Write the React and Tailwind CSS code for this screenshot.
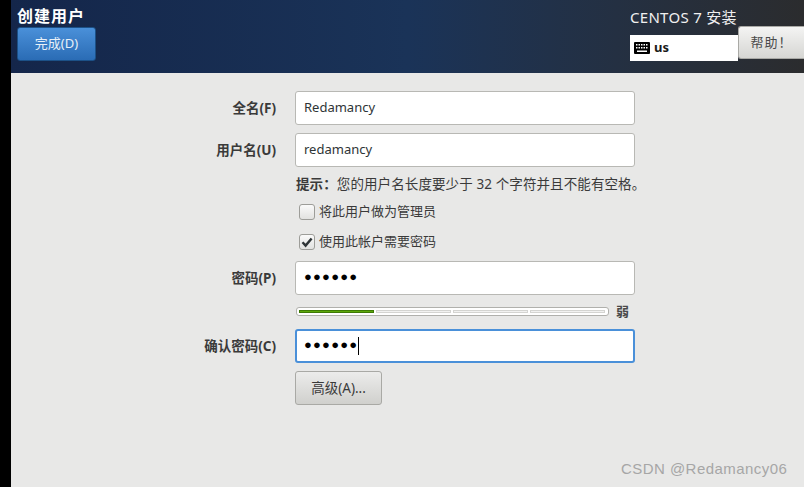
import React from 'react';

const Field = ({ label, children }) => (
  <div className="flex items-center">
    <label className="w-[265px] text-right text-[13.5px] font-bold text-[#3a3a3a]">{label}</label>
    <div className="ml-[19px]">{children}</div>
  </div>
);

const Input = ({ value, focused, dots }) => (
  <div
    className={`flex items-center w-[340px] h-[34px] bg-white rounded-[3px] ${
      focused ? 'border-2 border-[#4a90d9] pl-[7px]' : 'border border-[#b8b8b4] pl-[8px]'
    } ${dots ? 'text-[13px] text-black tracking-[1.2px]' : 'text-[13px] text-[#2e3436]'}`}
  >
    <span className={dots ? 'font-["Liberation_Sans"] -mt-[2px]' : ''}>{value}</span>
    {focused && <span className="w-px h-[18px] bg-black" />}
  </div>
);

const Check = ({ checked, label }) => (
  <div className="flex items-center ml-[288px] h-[16px]">
    <div className="flex items-center justify-center w-[16px] h-[16px] rounded-[3px] border border-[#9d9d99] bg-gradient-to-b from-[#fafafa] to-[#e2e2e0]">
      {checked && (
        <svg width="12" height="12" viewBox="0 0 12 12">
          <path d="M1.5 6.2 4.6 9.6 10.6 2.4" fill="none" stroke="#2e3436" strokeWidth="2.4" />
        </svg>
      )}
    </div>
    <span className="ml-[4px] text-[13px] text-[#3a3a3a]">{label}</span>
  </div>
);

export default function App() {
  return (
    <div className='relative flex w-[804px] h-[487px] overflow-hidden bg-black font-["Noto_Sans","Noto_Sans_CJK_SC",sans-serif]'>
      <div className="w-[11px] shrink-0" />
      <div className="flex flex-col flex-1 bg-[#e8e8e7]">
        <header className="flex justify-between h-[73px] bg-gradient-to-r from-[#14264a] via-[#1a3358] to-[#2b2c2e]">
          <div className="pl-[6px] pt-[6px]">
            <h1 className="text-[16px] leading-[20px] font-bold text-white tracking-[1px]">创建用户</h1>
            <button className="mt-px w-[79px] h-[34px] rounded-[3px] border border-[#1c5187] bg-gradient-to-b from-[#4a90d9] to-[#2a6cb5] text-[13px] text-[#e8f0f8]">
              完成(D)
            </button>
          </div>
          <div className="flex flex-col w-[174px] pt-[7px]">
            <div className="text-[15px] leading-[20px] text-[#f0f0f0] tracking-[0.3px] whitespace-nowrap">CENTOS 7 安装</div>
            <div className="flex items-start -mt-[1px]">
              <div className="flex items-center w-[108px] h-[26px] mt-[9px] bg-white pl-[4px]">
                <svg width="16" height="12" viewBox="0 0 16 12">
                  <rect width="16" height="12" rx="1" fill="#000" />
                  <g fill="#fff">
                    <rect x="2" y="2" width="1.5" height="1.5" />
                    <rect x="4.5" y="2" width="1.5" height="1.5" />
                    <rect x="7" y="2" width="1.5" height="1.5" />
                    <rect x="9.5" y="2" width="1.5" height="1.5" />
                    <rect x="12" y="2" width="1.5" height="1.5" />
                    <rect x="2" y="5" width="1.5" height="1.5" />
                    <rect x="4.5" y="5" width="1.5" height="1.5" />
                    <rect x="7" y="5" width="1.5" height="1.5" />
                    <rect x="9.5" y="5" width="1.5" height="1.5" />
                    <rect x="12" y="5" width="1.5" height="1.5" />
                    <rect x="3" y="8.5" width="10" height="1.5" />
                  </g>
                </svg>
                <span className="ml-[4px] text-[13px] font-bold text-[#1a1a1a]">us</span>
              </div>
              <button className="w-[66px] h-[33px] rounded-l-[3px] border border-[#a9a9a5] border-r-0 bg-gradient-to-b from-[#f4f4f3] to-[#d6d6d3] text-[13px] text-[#4a4a4a] tracking-[1px]">
                帮助！
              </button>
            </div>
          </div>
        </header>

        <main className="flex flex-col pt-[18px]">
          <Field label="全名(F)"><Input value="Redamancy" /></Field>
          <div className="mt-[8px]">
            <Field label="用户名(U)"><Input value="redamancy" /></Field>
          </div>
          <p className="ml-[285px] mt-[8px] text-[13.5px] leading-[18px] text-[#3a3a3a] whitespace-nowrap tracking-[0.1px]">
            <b>提示：</b>您的用户名长度要少于 32 个字符并且不能有空格。
          </p>
          <div className="mt-[11px]"><Check label="将此用户做为管理员" /></div>
          <div className="mt-[14px]"><Check checked label="使用此帐户需要密码" /></div>
          <div className="mt-[11px]">
            <Field label="密码(P)"><Input value="●●●●●●" dots /></Field>
          </div>
          <div className="flex items-center ml-[285px] mt-[12px]">
            <div className="flex gap-[2px] w-[313px] h-[9px] p-[2px] rounded-[3px] border border-[#b0b0ac] bg-white">
              <div className="w-[75px] bg-[#5ca80a] border border-[#3d7a05]" />
              <div className="w-[75px] bg-[#f2f2f1] border border-[#d4d4d1]" />
              <div className="w-[75px] bg-[#f2f2f1] border border-[#d4d4d1]" />
              <div className="w-[75px] bg-[#f2f2f1] border border-[#d4d4d1]" />
            </div>
            <span className="ml-[7px] text-[13px] leading-[9px] font-bold text-[#4a4a4a]">弱</span>
          </div>
          <div className="mt-[13px]">
            <Field label="确认密码(C)"><Input value="●●●●●●" dots focused /></Field>
          </div>
          <button className="ml-[284px] mt-[8px] w-[87px] h-[34px] rounded-[3px] border border-[#a9a9a5] bg-gradient-to-b from-[#ececeb] to-[#d0d0cd] text-[13.5px] text-[#3a3a3a]">
            高级(A)...
          </button>
        </main>
      </div>
      <span className='absolute left-[621px] top-[460px] font-["Liberation_Sans"] text-[15px] leading-[18px] text-[#a6a6a6] tracking-[0.45px]'>
        CSDN @Redamancy06
      </span>
    </div>
  );
}
